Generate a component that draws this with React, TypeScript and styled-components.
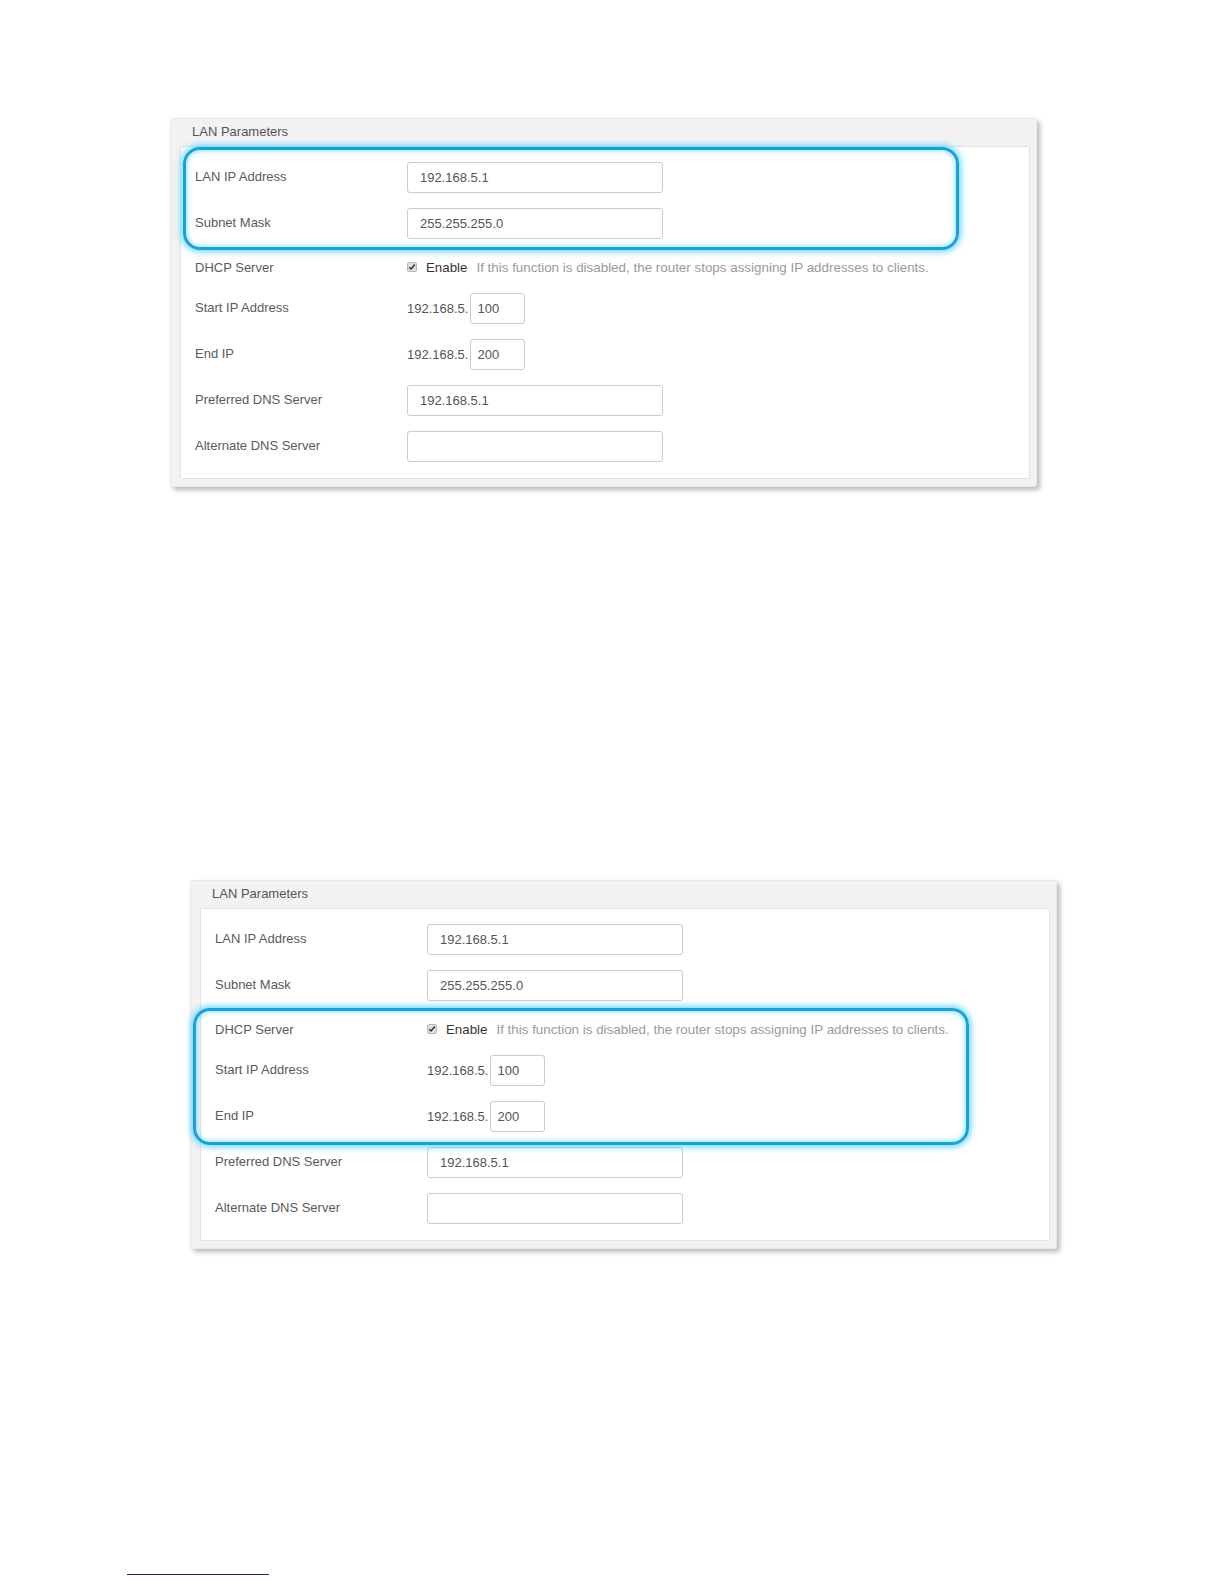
import React from "react";
import styled, { createGlobalStyle } from "styled-components";

const GlobalStyle = createGlobalStyle`
  html, body {
    margin: 0;
    padding: 0;
    background: #ffffff;
  }
  body {
    font-family: "Liberation Sans", Arial, sans-serif;
  }
`;

const Page = styled.div`
  width: 1224px;
  height: 1584px;
  display: flex;
  flex-direction: column;
  align-items: flex-start;
  box-sizing: border-box;
`;

const Figure = styled.div<{ $left: number; $top: number }>`
  position: relative;
  margin-left: ${(p) => p.$left}px;
  margin-top: ${(p) => p.$top}px;
`;

const Panel = styled.section`
  width: 867px;
  box-sizing: border-box;
  background: #f2f2f2;
  border: 1px solid #e9e9e9;
  border-radius: 3px;
  box-shadow: 3px 3px 5px rgba(0, 0, 0, 0.28);
  padding: 0 6px 7px 9px;
`;

const PanelHeader = styled.div`
  height: 27px;
  line-height: 25px;
  padding-left: 12px;
  font-size: 13px;
  color: #555555;
`;

const PanelBody = styled.div`
  background: #ffffff;
  border: 1px solid #e2e2e2;
  border-radius: 2px;
  padding: 15px 14px 16px 14px;
  display: flex;
  flex-direction: column;
  gap: 15px;
`;

const Row = styled.div<{ $compact?: boolean }>`
  display: flex;
  align-items: center;
  height: ${(p) => (p.$compact ? 22 : 31)}px;
  margin-top: ${(p) => (p.$compact ? 2 : 0)}px;
`;

const Label = styled.div<{ $compact?: boolean }>`
  width: 212px;
  flex: none;
  font-size: 13px;
  color: #5a5a5a;
  margin-top: ${(p) => (p.$compact ? 0 : -3)}px;
`;

const Control = styled.div`
  display: flex;
  align-items: center;
  font-size: 13px;
  color: #555555;
`;

const TextInput = styled.div<{ $small?: boolean }>`
  box-sizing: border-box;
  width: ${(p) => (p.$small ? 55 : 256)}px;
  height: 31px;
  border: 1px solid #cccccc;
  border-radius: 3px;
  padding: 0 ${(p) => (p.$small ? 6 : 12)}px;
  display: flex;
  align-items: center;
  font-size: 13px;
  color: #555555;
  background: #ffffff;
  margin-left: ${(p) => (p.$small ? 2 : 0)}px;
`;

const Prefix = styled.span`
  font-size: 13px;
  color: #555555;
`;

const CheckBox = styled.span`
  width: 10px;
  height: 10px;
  box-sizing: border-box;
  border: 1px solid #b9b9b9;
  border-radius: 2px;
  background: #dedede;
  display: inline-flex;
  align-items: center;
  justify-content: center;
  margin-right: 9px;
`;

const EnableText = styled.span`
  font-size: 13.3px;
  color: #333333;
`;

const Hint = styled.span`
  font-size: 13.4px;
  color: #9a9a9a;
  margin-left: 9px;
`;

const Highlight = styled.div<{ $left: number; $top: number; $width: number; $height: number }>`
  position: absolute;
  left: ${(p) => p.$left}px;
  top: ${(p) => p.$top}px;
  width: ${(p) => p.$width}px;
  height: ${(p) => p.$height}px;
  box-sizing: border-box;
  border: 3px solid #12a3dc;
  border-radius: 17px;
  box-shadow: 0 0 6px 2px rgba(70, 205, 255, 0.8),
    inset 0 0 5px 1px rgba(70, 205, 255, 0.6);
  pointer-events: none;
`;

const FootRule = styled.div`
  margin-left: 127px;
  margin-top: 325px;
  width: 142px;
  height: 1px;
  background: #1f1f94;
`;

type HL = { left: number; top: number; width: number; height: number };

const Check = () => (
  <svg width="8" height="8" viewBox="0 0 8 8">
    <path d="M1.2 4.2 L3.1 6 L6.8 1.6" fill="none" stroke="#333" strokeWidth="1.5" />
  </svg>
);

const LanPanel: React.FC<{ left: number; top: number; highlight: HL }> = ({
  left,
  top,
  highlight,
}) => (
  <Figure $left={left} $top={top}>
    <Panel>
      <PanelHeader>LAN Parameters</PanelHeader>
      <PanelBody>
        <Row>
          <Label>LAN IP Address</Label>
          <Control>
            <TextInput>192.168.5.1</TextInput>
          </Control>
        </Row>
        <Row>
          <Label>Subnet Mask</Label>
          <Control>
            <TextInput>255.255.255.0</TextInput>
          </Control>
        </Row>
        <Row $compact>
          <Label $compact>DHCP Server</Label>
          <Control>
            <CheckBox>
              <Check />
            </CheckBox>
            <EnableText>Enable</EnableText>
            <Hint>If this function is disabled, the router stops assigning IP addresses to clients.</Hint>
          </Control>
        </Row>
        <Row>
          <Label>Start IP Address</Label>
          <Control>
            <Prefix>192.168.5.</Prefix>
            <TextInput $small>100</TextInput>
          </Control>
        </Row>
        <Row>
          <Label>End IP</Label>
          <Control>
            <Prefix>192.168.5.</Prefix>
            <TextInput $small>200</TextInput>
          </Control>
        </Row>
        <Row>
          <Label>Preferred DNS Server</Label>
          <Control>
            <TextInput>192.168.5.1</TextInput>
          </Control>
        </Row>
        <Row>
          <Label>Alternate DNS Server</Label>
          <Control>
            <TextInput />
          </Control>
        </Row>
      </PanelBody>
    </Panel>
    <Highlight
      $left={highlight.left}
      $top={highlight.top}
      $width={highlight.width}
      $height={highlight.height}
    />
  </Figure>
);

export default function App() {
  return (
    <>
      <GlobalStyle />
      <Page>
        <LanPanel left={170} top={118} highlight={{ left: 13, top: 29, width: 776, height: 103 }} />
        <LanPanel left={190} top={393} highlight={{ left: 3, top: 128, width: 776, height: 137 }} />
        <FootRule />
      </Page>
    </>
  );
}
